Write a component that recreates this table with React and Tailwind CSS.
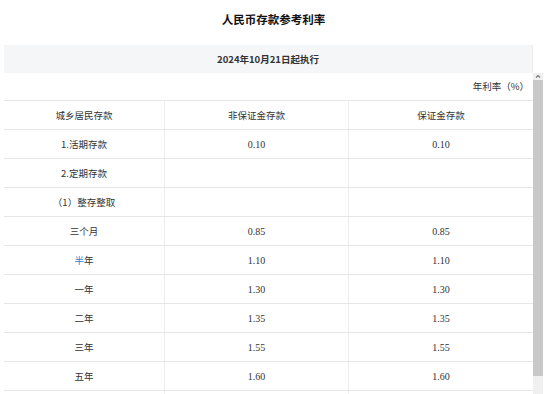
const rows = [
  { name: '1.活期存款', a: '0.10', b: '0.10' },
  { name: '2.定期存款', a: '', b: '' },
  { name: '（1）整存整取', a: '', b: '' },
  { name: '三个月', a: '0.85', b: '0.85' },
  { name: '半年', a: '1.10', b: '1.10', blue: true },
  { name: '一年', a: '1.30', b: '1.30' },
  { name: '二年', a: '1.35', b: '1.35' },
  { name: '三年', a: '1.55', b: '1.55' },
  { name: '五年', a: '1.60', b: '1.60' },
  { name: '', a: '', b: '' },
]

const cjk = { fontFamily: '"Noto Sans CJK SC", sans-serif' }
const num = { fontFamily: '"Liberation Serif", "Noto Sans CJK SC", serif' }

function Row({ children }) {
  return (
    <div className="flex h-[29px] shrink-0 border-b border-[#e6e6e6] text-[9.5px] text-[#333]">
      {children}
    </div>
  )
}

// the page is captured without native scrollbars, so the bar is drawn
function ScrollBar() {
  return (
    <div className="flex w-[10px] flex-col bg-[#f0f0f0]">
      <svg width="10" height="7" viewBox="0 0 10 7" className="shrink-0">
        <path d="M3 4.5L5 2.5L7 4.5" fill="none" stroke="#777" strokeWidth="1.2" />
      </svg>
      <div className="h-[296px] bg-[#c8c8c8]" />
    </div>
  )
}

export default function App() {
  return (
    <div className="h-[394px] w-[550px] overflow-hidden bg-white pl-[4px] pr-[7px]" style={cjk}>
      <h1 className="h-[45px] pt-[10px] text-center text-[11.5px] font-bold leading-[18px] text-[#111]">
        人民币存款参考利率
      </h1>

      <div className="flex h-[28px]">
        <div className="flex w-[529px] items-center justify-center border-r border-[#ececec] bg-[#f5f6f8] text-[9.5px] font-bold text-[#333]">
          2024年10月21日起执行
        </div>
      </div>

      <div className="flex h-[321px] w-[539px]">
        <div className="flex w-[529px] flex-col overflow-hidden">
          <div className="flex h-[28px] shrink-0 items-center justify-end border-b border-[#e6e6e6] pr-[4px] text-[9.5px] text-[#333]">
            年利率（%）
          </div>
          <Row>
            <div className="flex w-[161px] items-center justify-center border-r border-[#eeeeee]">城乡居民存款</div>
            <div className="flex w-[184px] items-center justify-center border-r border-[#eeeeee]">非保证金存款</div>
            <div className="flex w-[184px] items-center justify-center">保证金存款</div>
          </Row>
          {rows.map((r, i) => (
            <Row key={i}>
              <div className="flex w-[161px] items-center justify-center border-r border-[#eeeeee]">
                {r.blue ? (
                  <span>
                    <span className="text-[#2f80d1]">半</span>年
                  </span>
                ) : (
                  r.name
                )}
              </div>
              <div className="flex w-[184px] items-center justify-center border-r border-[#eeeeee] text-[10px]" style={num}>
                {r.a}
              </div>
              <div className="flex w-[184px] items-center justify-center text-[10px]" style={num}>
                {r.b}
              </div>
            </Row>
          ))}
        </div>
        <ScrollBar />
      </div>
    </div>
  )
}
